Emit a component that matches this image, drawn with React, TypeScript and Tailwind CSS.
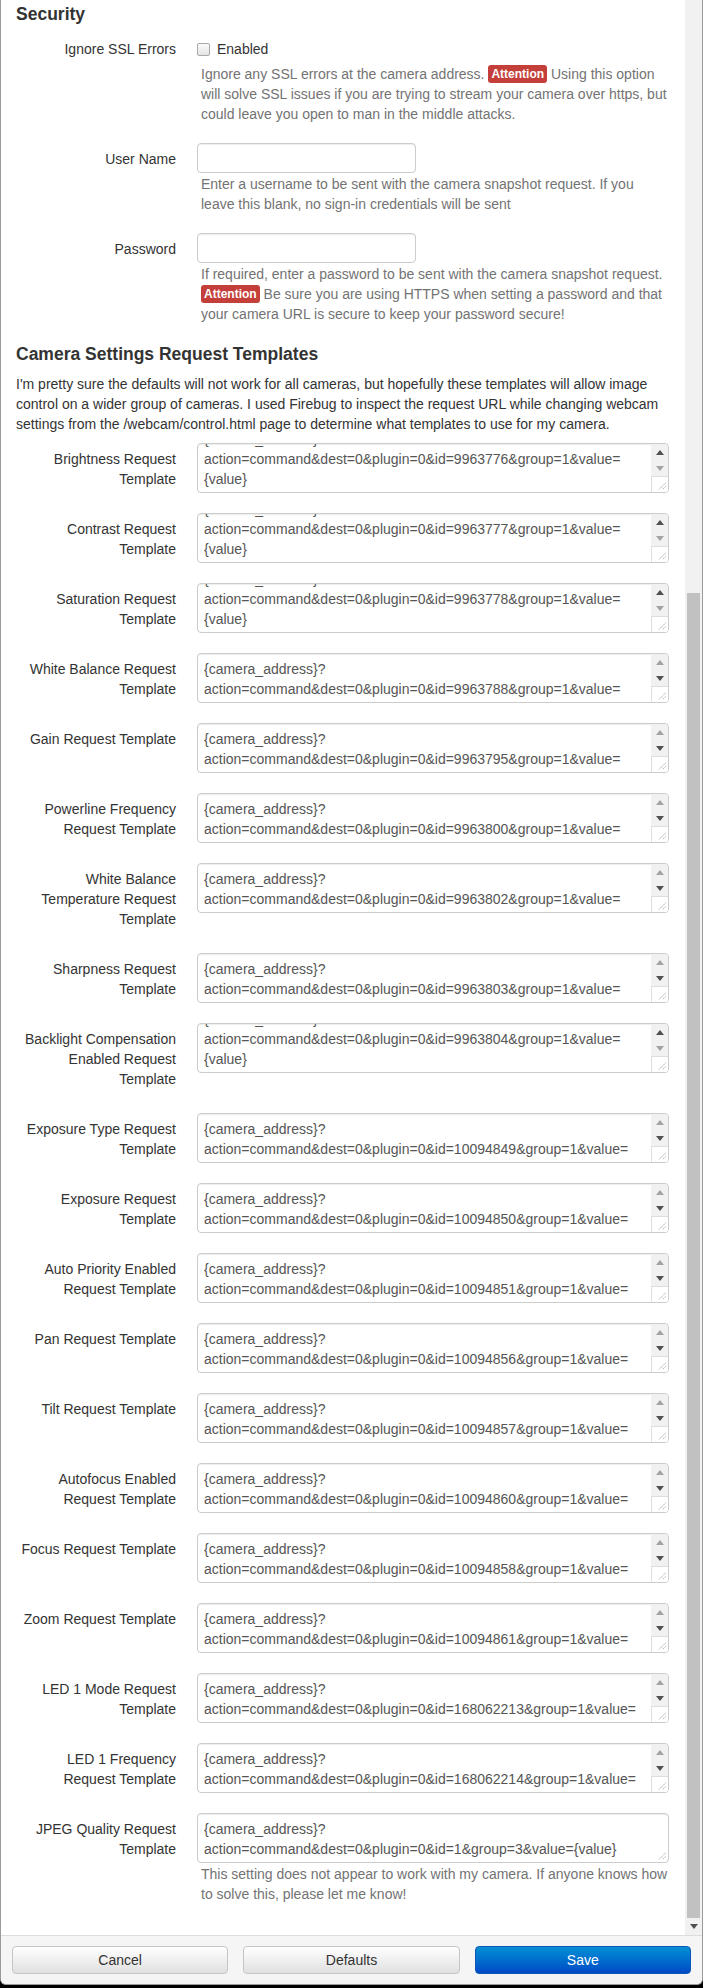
import React from 'react';

type Tpl = { label: string; id: string; scrolled?: boolean };

const templates: Tpl[] = [
  { label: 'Brightness Request Template', id: '9963776', scrolled: true },
  { label: 'Contrast Request Template', id: '9963777', scrolled: true },
  { label: 'Saturation Request Template', id: '9963778', scrolled: true },
  { label: 'White Balance Request Template', id: '9963788' },
  { label: 'Gain Request Template', id: '9963795' },
  { label: 'Powerline Frequency Request Template', id: '9963800' },
  { label: 'White Balance Temperature Request Template', id: '9963802' },
  { label: 'Sharpness Request Template', id: '9963803' },
  { label: 'Backlight Compensation Enabled Request Template', id: '9963804', scrolled: true },
  { label: 'Exposure Type Request Template', id: '10094849' },
  { label: 'Exposure Request Template', id: '10094850' },
  { label: 'Auto Priority Enabled Request Template', id: '10094851' },
  { label: 'Pan Request Template', id: '10094856' },
  { label: 'Tilt Request Template', id: '10094857' },
  { label: 'Autofocus Enabled Request Template', id: '10094860' },
  { label: 'Focus Request Template', id: '10094858' },
  { label: 'Zoom Request Template', id: '10094861' },
  { label: 'LED 1 Mode Request Template', id: '168062213' },
  { label: 'LED 1 Frequency Request Template', id: '168062214' },
];

function Attention() {
  return (
    <span className="inline-block align-top mt-[1px] h-[18px] leading-[18px] px-[3px] rounded-[3px] bg-[#c53f3a] text-white text-[12px] font-bold">
      Attention
    </span>
  );
}

function Arrow({ up, dark }: { up?: boolean; dark?: boolean }) {
  return (
    <svg width="8" height="5" viewBox="0 0 8 5">
      <path d={up ? 'M0 5 L4 0 L8 5 Z' : 'M0 0 L8 0 L4 5 Z'} fill={dark ? '#505050' : '#a3a3a3'} />
    </svg>
  );
}

function Grip() {
  return (
    <svg width="9" height="9" viewBox="0 0 9 9" className="absolute right-[2px] bottom-[2px]">
      <path d="M8.5 2 L2 8.5 M8.5 5.5 L5.5 8.5" stroke="#8a8a8a" strokeWidth="1" strokeDasharray="1 1" />
    </svg>
  );
}

function TemplateBox({ lines, scrolled, bar = true }: { lines: string[]; scrolled?: boolean; bar?: boolean }) {
  return (
    <div className="relative flex h-[50px] overflow-hidden rounded-[4px] border border-[#ccc] bg-white shadow-[inset_0_1px_1px_rgba(0,0,0,0.075)]">
      <div className="flex-1 overflow-hidden whitespace-nowrap pl-[6px] pt-[5px] text-[14px] leading-[20px] text-[#555]">
        <div className={scrolled ? '-mt-[20px]' : ''}>
          {lines.map((l, i) => (
            <div key={i}>{l}</div>
          ))}
        </div>
      </div>
      {bar ? (
        <div className="flex w-[17px] flex-col bg-[#f1f1f1]">
          <div className="flex h-[16px] items-center justify-center">
            <Arrow up dark={scrolled} />
          </div>
          <div className="flex h-[16px] items-center justify-center">
            <Arrow dark={!scrolled} />
          </div>
          <div className="relative flex-1 border-l border-t border-[#dedede] bg-white">
            <Grip />
          </div>
        </div>
      ) : (
        <Grip />
      )}
    </div>
  );
}

function Row({ label, children }: { label: string; children: React.ReactNode }) {
  return (
    <div className="flex items-start">
      <div className="w-[160px] shrink-0 pt-[6px] pb-[4px] text-right leading-[20px] text-[#333]">{label}</div>
      <div className="ml-[21px] min-w-0 flex-1">{children}</div>
    </div>
  );
}

function Help({ children, className = '' }: { children: React.ReactNode; className?: string }) {
  return <div className={`whitespace-nowrap pl-[4px] leading-[20px] text-[#737373] ${className}`}>{children}</div>;
}

function TextInput() {
  return <div className="h-[30px] w-[219px] rounded-[4px] border border-[#ccc] bg-white shadow-[inset_0_1px_1px_rgba(0,0,0,0.075)]" />;
}

export default function App() {
  return (
    <div className="h-[1988px] bg-black font-['Liberation_Sans',Arial,sans-serif] text-[14px]">
      <div className="flex h-[1985px] flex-col overflow-hidden rounded-b-[6px] border-x border-b border-[#9a9a9a] bg-white">
        <div className="flex h-[1935px]">
          {/* scrolled modal body */}
          <div className="flex-1 overflow-hidden pl-[15px] pr-[16px]">
            <h4 className="mt-[4px] text-[17.5px] font-bold leading-[20px] text-[#333]">Security</h4>

            <div className="mt-[15px] flex items-start">
              <div className="w-[160px] shrink-0 text-right leading-[20px] text-[#333]">Ignore SSL Errors</div>
              <div className="ml-[21px] flex-1">
                <div className="flex h-[20px] items-center">
                  <span className="h-[13px] w-[13px] rounded-[2px] border border-[#a9a9a9] bg-gradient-to-b from-[#fbfbfb] to-[#e4e4e4]" />
                  <span className="ml-[7px] text-[#333]">Enabled</span>
                </div>
                <Help className="mt-[5px]">
                  Ignore any SSL errors at the camera address. <Attention /> Using this option
                  <br />
                  will solve SSL issues if you are trying to stream your camera over https, but
                  <br />
                  could leave you open to man in the middle attacks.
                </Help>
              </div>
            </div>

            <div className="mt-[19px]">
              <Row label="User Name">
                <TextInput />
                <Help className="mt-[1px]">
                  Enter a username to be sent with the camera snapshot request. If you
                  <br />
                  leave this blank, no sign-in credentials will be sent
                </Help>
              </Row>
            </div>

            <div className="mt-[19px]">
              <Row label="Password">
                <TextInput />
                <Help className="mt-[1px]">
                  If required, enter a password to be sent with the camera snapshot request.
                  <br />
                  <Attention /> Be sure you are using HTTPS when setting a password and that
                  <br />
                  your camera URL is secure to keep your password secure!
                </Help>
              </Row>
            </div>

            <h4 className="mt-[19.5px] text-[17.5px] font-bold leading-[20px] text-[#333]">
              Camera Settings Request Templates
            </h4>
            <p className="mt-[10.5px] whitespace-nowrap leading-[20px] text-[#333]">
              I'm pretty sure the defaults will not work for all cameras, but hopefully these templates will allow image
              <br />
              control on a wider group of cameras. I used Firebug to inspect the request URL while changing webcam
              <br />
              settings from the /webcam/control.html page to determine what templates to use for my camera.
            </p>

            <div className="mt-[9.3px] flex flex-col gap-[20px]">
              {templates.map((t) => (
                <Row key={t.id} label={t.label}>
                  <TemplateBox
                    scrolled={t.scrolled}
                    lines={[
                      '{camera_address}?',
                      `action=command&dest=0&plugin=0&id=${t.id}&group=1&value=`,
                      '{value}',
                    ]}
                  />
                </Row>
              ))}
              <Row label="JPEG Quality Request Template">
                <TemplateBox
                  bar={false}
                  lines={['{camera_address}?', 'action=command&dest=0&plugin=0&id=1&group=3&value={value}']}
                />
                <Help className="mt-[1px]">
                  This setting does not appear to work with my camera. If anyone knows how
                  <br />
                  to solve this, please let me know!
                </Help>
              </Row>
            </div>
          </div>

          {/* page scrollbar */}
          <div className="flex w-[17px] flex-col bg-[#f1f1f1]">
            <div className="h-[593px]" />
            <div className="mx-[2px] flex-1 bg-[#c1c1c1]" />
            <div className="flex h-[17px] items-center justify-center">
              <Arrow dark />
            </div>
          </div>
        </div>

        <div className="flex flex-1 gap-[15px] border-t border-[#ddd] bg-[#f5f5f5] px-[11px] pt-[10px]">
          <button className="h-[28px] flex-1 rounded-[4px] border border-[#c5c5c5] bg-gradient-to-b from-white to-[#e0e0e0] text-[#333]">
            Cancel
          </button>
          <button className="h-[28px] flex-1 rounded-[4px] border border-[#c5c5c5] bg-gradient-to-b from-white to-[#e0e0e0] text-[#333]">
            Defaults
          </button>
          <button className="h-[28px] flex-1 rounded-[4px] border border-[#0a58b6] bg-gradient-to-b from-[#0a8fd4] to-[#0048c6] text-white">
            Save
          </button>
        </div>
      </div>
    </div>
  );
}
